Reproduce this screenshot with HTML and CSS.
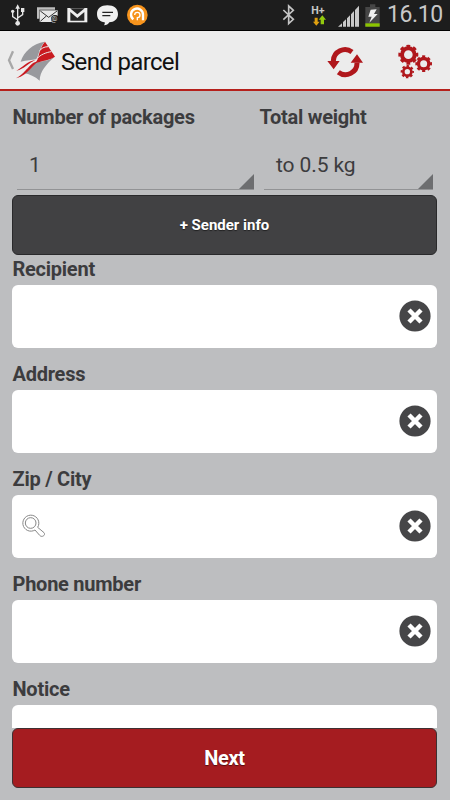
FILE: index.html
```html
<!DOCTYPE html>
<html lang="en">
<head>
    <meta charset="UTF-8">
    <meta name="viewport" content="width=device-width, initial-scale=1.0">
    <title>Send parcel</title>
    <link rel="stylesheet" href="styles.css">
</head>
<body>
    <div class="statusbar">
        <svg class="status-icons" width="150" height="31" viewBox="0 0 450 93">
            <!-- usb -->
            <g fill="none" stroke="#e6e6e6" stroke-width="4">
                <path d="M53 70V22M53 60L38 50V35M53 54L68 44V32"/>
            </g>
            <g fill="#e6e6e6">
                <path d="M46 26L53 13L60 26Z"/>
                <circle cx="53" cy="70" r="7"/>
                <circle cx="38" cy="34" r="5"/>
                <path d="M63 24H73V36H63Z"/>
            </g>
            <!-- mail with @ -->
            <path d="M111 22H165V29H118V56H111Z" fill="#bdbdbd"/>
            <path d="M119 31H173V66H119Z" fill="#e8e8e8"/>
            <path d="M121 33L146 52L171 33M121 64L139 48" fill="none" stroke="#333" stroke-width="3"/>
            <circle cx="165" cy="57" r="12" fill="#1d1d1d"/>
            <text class="at" x="154" y="63">@</text>
            <!-- gmail -->
            <path d="M202 24H262V67H202Z" fill="#eee"/>
            <path d="M211 36L232 54L253 36V62H211Z" fill="#262626"/>
            <path d="M210 25H254L232 43Z" fill="#262626"/>
            <!-- message -->
            <path d="M322 16C342 16 354 26 354 42C354 58 342 66 328 67C325 72 319 76 312 76C314 73 315 70 314 67C300 65 291 57 291 42C291 26 303 16 322 16Z" fill="#f0f0f0"/>
            <path d="M307 37H339M307 47H331" stroke="#222" stroke-width="4"/>
            <!-- antivirus -->
            <circle cx="412" cy="45" r="31" fill="#f7941d"/>
            <path d="M400 58A18 18 0 1 1 429 45V61" fill="none" stroke="#fff" stroke-width="7"/>
            <path d="M404 45A8 8 0 1 1 412 53V61" fill="none" stroke="#fff" stroke-width="4"/>
        </svg>
        <svg class="status-icons" width="112" height="31" viewBox="0 0 336 93">
            <!-- bluetooth -->
            <path d="M40 30L70 58L56 71V18L70 31L40 59" fill="none" stroke="#c4c4c4" stroke-width="5"/>
            <!-- network -->
            <text class="net" x="124" y="41">H+</text>
            <path d="M134 53H143V65H149L139 77L129 65H134Z" fill="#e0a010"/>
            <path d="M152 73V59H146L157 46L168 59H162V73Z" fill="#93c90e"/>
            <!-- signal -->
            <path d="M204 80L216 70V80ZM219 80V66L228 58V80ZM231 80V55L240 46V80ZM243 80V43L252 33V80ZM255 80V30L267 17V80Z" fill="#c9c9c9"/>
            <!-- battery -->
            <path d="M300 13H316V21H329V80H286V21H300Z" fill="#464646"/>
            <path d="M286 70H329V80H286Z" fill="#8bc400"/>
            <path d="M302 29L320 28L312 42H323L298 68L305 50H295Z" fill="#eee"/>
        </svg>
        <span class="clock">16.10</span>
    </div>

    <div class="header">
        <svg class="back" width="10" height="20" viewBox="0 0 30 60">
            <path d="M24 4L12 31L24 57" fill="none" stroke="#a8a8a8" stroke-width="7"/>
        </svg>
        <svg class="logo" width="40" height="40" viewBox="48 41 120 120">
            <path d="M134 43C98 49 72 72 62 103C80 98 96 99 108 96C116 88 117 62 134 43Z" fill="#98999d"/>
            <path d="M163 89C142 103 120 101 104 108C96 122 86 130 72 138C88 140 105 148 119 160C120 132 138 112 163 89Z" fill="#98999d"/>
            <path d="M135 43L165 88C148 99 126 100 106 108C118 92 116 65 135 43Z" fill="#c91a20"/>
            <path d="M124 98C104 101 88 143 48 153C74 139 82 118 100 106Z" fill="#c91a20"/>
            <path d="M49 130C66 123 80 100 110 98C86 104 72 127 49 130Z" fill="#c91a20"/>
            <path d="M144 58C132 58 123 64 119 70M154 73C138 75 120 83 112 93M112 96C92 105 86 122 66 136" fill="none" stroke="#ececec" stroke-width="3"/>
        </svg>
        <h1>Send parcel</h1>
        <svg class="refresh" width="36" height="32" viewBox="50 52 108 96">
            <path d="M69 97A35 35 0 0 1 125 70" fill="none" stroke="#b0171c" stroke-width="15"/>
            <path d="M140 102A35 35 0 0 1 84 131" fill="none" stroke="#b0171c" stroke-width="15"/>
            <path d="M51 97H88L70 122ZM121 102H158L140 77Z" fill="#b0171c"/>
        </svg>
        <svg class="gears" width="35" height="35" viewBox="263 47 105 105">
            <g fill="none" stroke="#b0171c">
                <circle cx="294" cy="79" r="19" stroke-width="12"/>
                <circle cx="294" cy="79" r="26" stroke-width="8" pathLength="16" stroke-dasharray="1.1 .9" stroke-dashoffset=".55"/>
                <circle cx="340" cy="106" r="15.500" stroke-width="10"/>
                <circle cx="340" cy="106" r="21.500" stroke-width="7" pathLength="16" stroke-dasharray="1.1 .9" stroke-dashoffset=".55"/>
                <circle cx="291" cy="130" r="12" stroke-width="8"/>
                <circle cx="291" cy="130" r="17" stroke-width="6" pathLength="16" stroke-dasharray="1.1 .9" stroke-dashoffset=".55"/>
            </g>
        </svg>
    </div>

    <div class="content">
        <div class="spinners">
            <div class="packages">
                <label>Number of packages</label>
                <div class="spinner">1</div>
            </div>
            <div class="weight">
                <label>Total weight</label>
                <div class="spinner">to 0.5 kg</div>
            </div>
        </div>

        <button class="sender">+ Sender info</button>

        <div class="field">
            <label>Recipient</label>
            <div class="input">
                <svg class="clear" width="32" height="32" viewBox="0 0 32 32"><circle cx="16" cy="16" r="15.600"/><path d="M10 10L22 22M22 10L10 22"/></svg>
            </div>
        </div>
        <div class="field">
            <label>Address</label>
            <div class="input">
                <svg class="clear" width="32" height="32" viewBox="0 0 32 32"><circle cx="16" cy="16" r="15.600"/><path d="M10 10L22 22M22 10L10 22"/></svg>
            </div>
        </div>
        <div class="field">
            <label>Zip / City</label>
            <div class="input">
                <svg class="search" width="24" height="24" viewBox="66 163 72 72">
                    <path d="M113 203A24 24 0 1 0 105 211L119 227C126 235 138 226 132 219Z"/>
                    <circle cx="92" cy="190" r="16"/>
                </svg>
                <svg class="clear" width="32" height="32" viewBox="0 0 32 32"><circle cx="16" cy="16" r="15.600"/><path d="M10 10L22 22M22 10L10 22"/></svg>
            </div>
        </div>
        <div class="field">
            <label>Phone number</label>
            <div class="input">
                <svg class="clear" width="32" height="32" viewBox="0 0 32 32"><circle cx="16" cy="16" r="15.600"/><path d="M10 10L22 22M22 10L10 22"/></svg>
            </div>
        </div>
        <div class="field">
            <label>Notice</label>
            <div class="input"></div>
        </div>
    </div>

    <div class="footer">
        <button class="next">Next</button>
    </div>
</body>
</html>
```
FILE: styles.css
```css
* {
    box-sizing: border-box;
}
body {
    display: flex;
    flex-direction: column;
    height: 800px;
    margin: 0;
    overflow: hidden;
    font-family: Roboto, sans-serif;
    background-color: #bdbec0;
    color: #3c3c3e;
}
.statusbar {
    display: flex;
    justify-content: space-between;
    flex: none;
    height: 31px;
    background: #1d1d1d;
    border-bottom: 1px solid #000;
}
.statusbar .status-icons:nth-child(2) {
    margin-left: auto;
}
.at {
    font-size: 20px;
    fill: #ddd;
}
.net {
    font-size: 32px;
    font-weight: bold;
    fill: #c8c8c8;
}
.clock {
    width: 68px;
    padding-left: 5px;
    line-height: 30px;
    font-size: 23px;
    letter-spacing: -0.4px;
    color: #c8c8c8;
}
.header {
    display: flex;
    align-items: center;
    flex: none;
    height: 60px;
    padding: 0 17px 0 5px;
    background: #ececec;
    border-bottom: 2px solid #b5201c;
}
.logo {
    margin: 2px 0 0 1px;
}
h1 {
    flex: 1;
    margin: 3px 0 0 5px;
    font-size: 24px;
    font-weight: normal;
    letter-spacing: -0.65px;
    color: #111;
}
.refresh {
    margin: 3px 35px 0 0;
}
.gears {
    margin-top: 2px;
}
.content {
    flex: none;
    height: 637px;
    padding: 12px 13px 0 12px;
    overflow: hidden;
}
label {
    display: block;
    height: 30px;
    padding-left: 0.5px;
    line-height: 28px;
    font-size: 20px;
    font-weight: bold;
    letter-spacing: -0.25px;
}
.spinners {
    display: flex;
    height: 92px;
}
.packages {
    width: 247px;
}
.weight {
    flex: 1;
}
.spinner {
    position: relative;
    height: 57px;
    margin: 0 0 0 5px;
    padding: 4px 0 0 12px;
    line-height: 56px;
    font-size: 21px;
    letter-spacing: -0.1px;
    border-bottom: 1px solid #929395;
}
.packages .spinner {
    margin-right: 5px;
}
.weight .spinner {
    margin-right: 4px;
}
.spinner::after {
    content: "";
    position: absolute;
    right: 0;
    bottom: 0;
    border-left: 15px solid transparent;
    border-bottom: 15px solid #6d6e70;
}
button {
    display: block;
    width: 100%;
    height: 60px;
    font-family: inherit;
    font-weight: bold;
    color: #fff;
    border-radius: 6px;
    text-shadow: 0 1px 1px rgba(0, 0, 0, 0.5);
}
.sender {
    background: #414143;
    border: 1px solid #29292b;
    font-size: 15px;
}
.field {
    height: 105px;
}
.input {
    display: flex;
    align-items: center;
    height: 62.5px;
    padding: 0 6px 0 10px;
    background: #fff;
    border-radius: 6px;
}
.clear {
    margin-left: auto;
}
.clear circle {
    fill: #464648;
}
.clear path {
    fill: none;
    stroke: #fff;
    stroke-width: 4.5;
}
.search path,
.search circle {
    fill: none;
    stroke: #888;
    stroke-width: 3;
}
.footer {
    flex: 1;
    padding: 0 13px 0 12px;
}
.next {
    background: #a51c20;
    border: 1px solid #3e3032;
    font-size: 20px;
    letter-spacing: -0.4px;
}
```
